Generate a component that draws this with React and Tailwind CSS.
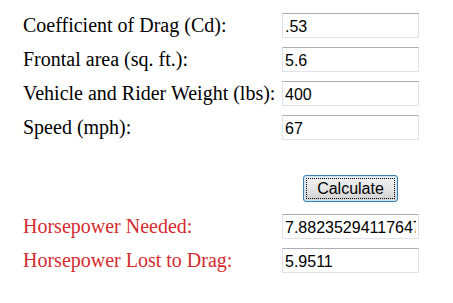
import React from 'react';

const inputs = [
  { label: 'Coefficient of Drag (Cd):', value: '.53' },
  { label: 'Frontal area (sq. ft.):', value: '5.6' },
  { label: 'Vehicle and Rider Weight (lbs):', value: '400' },
  { label: 'Speed (mph):', value: '67' },
];

const results = [
  { label: 'Horsepower Needed:', value: '7.88235294117647' },
  { label: 'Horsepower Lost to Drag:', value: '5.9511' },
];

const Field = ({ label, value, red }) => (
  <div className="flex h-[25px] items-center">
    <span
      className={`w-[259px] whitespace-nowrap text-[20px] leading-[25px] ${red ? 'text-[#d42b2f]' : 'text-black'}`}
      style={{ fontFamily: '"Liberation Serif", serif' }}
    >
      {label}
    </span>
    <input
      type="text"
      readOnly
      defaultValue={value}
      className="box-border h-[25px] w-[137px] border border-[#e2e3ea] border-t-[#abadb3] bg-white px-[2px] pt-[2px] pb-0 text-[16px] leading-[21px] text-black outline-none"
      style={{ fontFamily: '"Liberation Sans", Arial, sans-serif' }}
    />
  </div>
);

const App = () => {
  return (
    <div className="h-[303px] w-[453px] bg-white pl-[23px] pt-[13px]">
      <div className="flex flex-col gap-[9px]">
        {inputs.map((f) => (
          <Field key={f.label} label={f.label} value={f.value} />
        ))}
      </div>

      {/* button sits centred under the input column */}
      <div className="mt-[35px] flex w-[396px] justify-end">
        <div className="flex w-[137px] justify-center">
          <button
            type="button"
            className="box-border h-[27px] w-[95px] rounded-[3px] border border-[#3c7fb1] bg-gradient-to-b from-[#f2f2f2] via-[#e6e6e6] to-[#cfcfcf] p-[2px] shadow-[inset_0_0_0_1px_#c4e5f6]"
          >
            <span
              className="flex h-full w-full items-center justify-center border border-dotted border-black text-[16px] leading-none text-black"
              style={{ fontFamily: '"Liberation Sans", Arial, sans-serif' }}
            >
              Calculate
            </span>
          </button>
        </div>
      </div>

      <div className="mt-[12px] flex flex-col gap-[9px]">
        {results.map((f) => (
          <Field key={f.label} label={f.label} value={f.value} red />
        ))}
      </div>
    </div>
  );
};

export default App;
